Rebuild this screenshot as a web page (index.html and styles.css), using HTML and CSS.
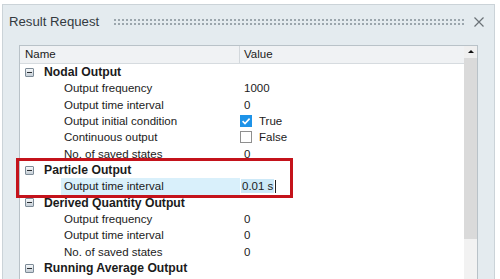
FILE: index.html
```html
<!DOCTYPE html>
<html lang="en">
<head>
  <meta charset="UTF-8">
  <title>Result Request</title>
  <link rel="stylesheet" href="styles.css">
</head>
<body>

  <div class="dialog">
    <div class="title-bar">
      <span class="title">Result Request</span>
      <span class="grip"></span>
      <span class="close">
        <svg width="10" height="10" viewBox="0 0 10 10"><path d="M0.5 0.5 L9.5 9.5 M9.5 0.5 L0.5 9.5" stroke="#6b7277" stroke-width="1.2" fill="none"/></svg>
      </span>
    </div>

    <div class="panel">
      <div class="grid">
        <div class="head">
          <div class="col-name">Name</div>
          <div class="col-value">Value</div>
        </div>

        <div class="row group"><div class="col-name"><span class="toggle"></span>Nodal Output</div><div class="col-value"></div></div>
        <div class="row"><div class="col-name"><span class="label">Output frequency</span></div><div class="col-value">1000</div></div>
        <div class="row"><div class="col-name"><span class="label">Output time interval</span></div><div class="col-value">0</div></div>
        <div class="row"><div class="col-name"><span class="label">Output initial condition</span></div><div class="col-value check-cell"><span class="check on"><svg width="12" height="12" viewBox="0 0 12 12"><path d="M2.6 6.2 L5 8.5 L9.6 3.6" stroke="#fff" stroke-width="1.6" fill="none"/></svg></span>True</div></div>
        <div class="row"><div class="col-name"><span class="label">Continuous output</span></div><div class="col-value check-cell"><span class="check"></span>False</div></div>
        <div class="row"><div class="col-name"><span class="label">No. of saved states</span></div><div class="col-value">0</div></div>

        <div class="row group"><div class="col-name"><span class="toggle"></span>Particle Output</div><div class="col-value"></div></div>
        <div class="row selected"><div class="col-name"><span class="label">Output time interval</span></div><div class="col-value edit"><span class="sel">0.01 s</span><span class="caret"></span></div></div>

        <div class="row group"><div class="col-name"><span class="toggle"></span>Derived Quantity Output</div><div class="col-value"></div></div>
        <div class="row"><div class="col-name"><span class="label">Output frequency</span></div><div class="col-value">0</div></div>
        <div class="row"><div class="col-name"><span class="label">Output time interval</span></div><div class="col-value">0</div></div>
        <div class="row"><div class="col-name"><span class="label">No. of saved states</span></div><div class="col-value">0</div></div>

        <div class="row group"><div class="col-name"><span class="toggle"></span>Running Average Output</div><div class="col-value"></div></div>
      </div>

      <div class="scrollbar">
        <div class="arrow"></div>
        <div class="thumb"></div>
        <div class="track"></div>
      </div>
    </div>

    <div class="callout"></div>
  </div>

</body>
</html>
```

FILE: styles.css
```css
body {
  margin: 0;
  background-color: #ffffff;
  font-family: 'Liberation Sans', Arial, sans-serif;
  color: #1b1b1b;
  overflow: hidden;
}

.dialog {
  position: relative;
  box-sizing: border-box;
  margin: 4px 0 0 2px;
  width: 493px;
  height: 275px;
  background-color: #e4ebef;
  border: 1px solid #cbd3d8;
  border-bottom: none;
  display: flex;
  flex-direction: column;
}

.title-bar {
  box-sizing: border-box;
  height: 40px;
  padding: 9px 10px 0 6px;
  display: flex;
  align-items: flex-start;
}

.title {
  font-size: 13.2px;
  line-height: 16px;
  color: #333a3f;
}

.grip {
  flex: 1;
  height: 8px;
  margin: 4px 8px 0 14px;
  background-image: radial-gradient(circle, #9aa4ab 0.7px, transparent 1.1px);
  background-size: 4px 4px;
}

.close {
  width: 10px;
  height: 10px;
  margin-top: 3px;
  display: flex;
}

.panel {
  flex: 1;
  margin: 0 16px 0 16px;
  border: 1px solid #b9c2c8;
  border-bottom: none;
  background-color: #ffffff;
  display: flex;
  overflow: hidden;
}

.grid {
  flex: 1;
}

.head {
  display: flex;
  height: 17px;
  background-color: #f0f2f4;
  border-bottom: 1px solid #d6dbdf;
  font-size: 11.5px;
  line-height: 17px;
}

.head .col-name {
  border-right: 1px solid #d3d8dc;
  padding-left: 5px;
}

.head .col-value {
  padding-left: 4px;
}

.col-name {
  box-sizing: border-box;
  width: 220px;
  display: flex;
  align-items: center;
}

.col-value {
  flex: 1;
  display: flex;
  align-items: center;
  padding-left: 4px;
}

.row {
  display: flex;
  height: 16.33px;
  font-size: 11.5px;
}

.row .col-name {
  padding-left: 41px;
}

.label {
  flex: 1;
  align-self: stretch;
  display: flex;
  align-items: center;
  padding-left: 3px;
}

.row.group .col-name {
  padding-left: 5px;
  font-weight: bold;
  font-size: 12.2px;
}

.toggle {
  position: relative;
  box-sizing: border-box;
  width: 9px;
  height: 9px;
  margin-right: 10px;
  border: 1px solid #7d8b97;
  border-radius: 1px;
  background: linear-gradient(#f6f8fa, #c5ced6);
}

.toggle::after {
  content: '';
  position: absolute;
  left: 1px;
  top: 3px;
  width: 5px;
  height: 1px;
  background-color: #2b2f33;
}

.check-cell {
  padding-left: 0;
}

.check {
  box-sizing: border-box;
  width: 12px;
  height: 12px;
  margin-right: 7px;
  border: 1px solid #8f8f8f;
  background-color: #ffffff;
  display: flex;
}

.check.on {
  border: none;
  background-color: #1e93e8;
}

.selected .label {
  background-color: #d9f0fb;
}

.edit {
  padding-left: 1px;
}

.sel {
  background-color: #cde9f8;
  padding: 1px 1px 1px 1px;
}

.caret {
  width: 1px;
  height: 13px;
  margin-left: 1px;
  background-color: #222;
}

.scrollbar {
  width: 13px;
  display: flex;
  flex-direction: column;
}

.arrow {
  height: 12px;
  background-color: #efefef;
  position: relative;
}

.arrow::after {
  content: '';
  position: absolute;
  left: 4px;
  top: 4px;
  border-left: 3px solid transparent;
  border-right: 3px solid transparent;
  border-bottom: 3px solid #111;
}

.thumb {
  height: 181px;
  background-color: #dadada;
}

.track {
  flex: 1;
  background-color: #f2f2f2;
}

.callout {
  position: absolute;
  left: 13px;
  top: 153px;
  width: 277px;
  height: 40px;
  box-sizing: border-box;
  border: 3px solid #c4131b;
}
```
